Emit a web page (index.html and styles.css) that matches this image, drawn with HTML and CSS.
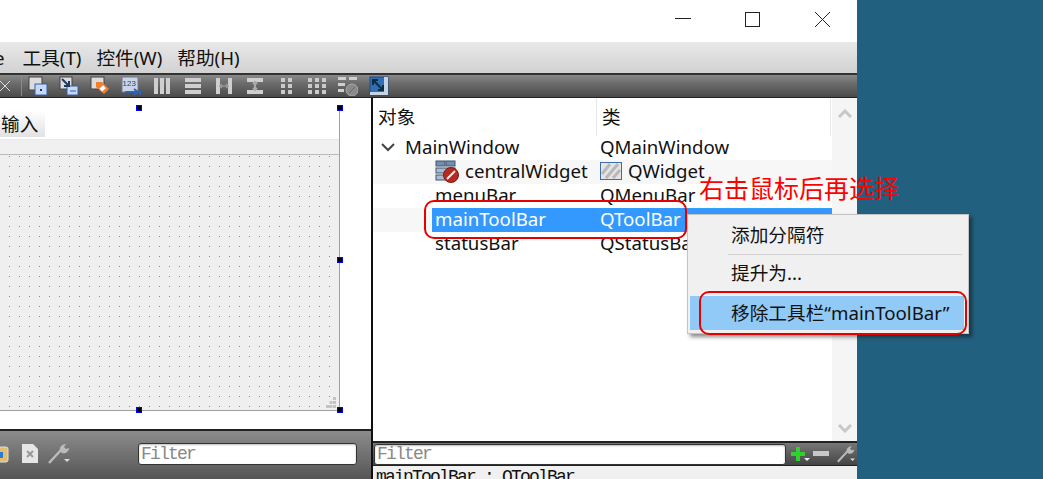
FILE: index.html
```html
<!DOCTYPE html>
<html lang="zh-CN">
<head>
<meta charset="utf-8">
<title>Qt Designer</title>
<link rel="stylesheet" href="styles.css">
</head>
<body>
<div class="window">
  <div class="titlebar">
    <svg class="winbtn" width="156" height="20" viewBox="0 0 156 20"><path d="M0 9.5h16" stroke="#222" fill="none"/><rect x="70.5" y="3.5" width="14" height="14" stroke="#222" fill="none"/><path d="M155 3l-15 15M140 3l15 15" stroke="#222" fill="none"/></svg>
  </div>
  <div class="menubar">
    <span class="menu-cut">e</span>
    <span class="menu-item">工具(T)</span>
    <span class="menu-item">控件(W)</span>
    <span class="menu-item">帮助(H)</span>
  </div>
  <div class="toolbar">
    <svg class="tool-x" width="10" height="10" viewBox="0 0 10 10"><path d="M0 0l10 10M10 0L0 10" stroke="#ddd" fill="none"/></svg>
    <span class="tool-sep"></span>
    <svg class="ti" width="20" height="20" viewBox="0 0 20 20"><rect x="1" y="1" width="13" height="13" fill="#dcdcdc" stroke="#444"/><rect x="7" y="8" width="12" height="11" fill="#c4d8f8" stroke="#3c5f9c"/><rect x="12" y="13" width="2" height="2" fill="#234"/></svg>
    <svg class="ti" width="20" height="20" viewBox="0 0 20 20"><rect x="1" y="1" width="12" height="12" fill="#dcdcdc" stroke="#444"/><rect x="8" y="10" width="11" height="9" fill="#c4d8f8" stroke="#3c5f9c"/><path d="M3 3l7 7M10 5v5H5" stroke="#1e3a66" stroke-width="2" fill="none"/><path d="M11 15h6" stroke="#3c5f9c"/></svg>
    <svg class="ti" width="20" height="20" viewBox="0 0 20 20"><rect x="1" y="1" width="13" height="12" fill="#dcdcdc" stroke="#444"/><path d="M6 6h6l7 7-5 5-8-7z" fill="#f08030"/><rect x="10" y="10" width="5" height="4" fill="#fff" transform="rotate(-40 13 12)"/></svg>
    <svg class="ti" width="20" height="20" viewBox="0 0 20 20"><rect x="1" y="1" width="16" height="15" fill="#c9d4ea" stroke="#778"/><text x="1.500" y="10" class="ti-num">123</text><path d="M4 16h12M13 13l4 3-4 3M19 13v6" stroke="#2f62b0" stroke-width="2" fill="none"/></svg>
    <svg class="ti" width="20" height="20" viewBox="0 0 20 20"><path d="M2 2h4v16H2zM8 2h4v16H8zM14 2h4v16h-4z" fill="#cfcfcf"/></svg>
    <svg class="ti" width="20" height="20" viewBox="0 0 20 20"><path d="M2 2h16v4H2zM2 8h16v4H2zM2 14h16v4H2z" fill="#cfcfcf"/></svg>
    <svg class="ti" width="20" height="20" viewBox="0 0 20 20"><path d="M2 2h4v16H2zM14 2h4v16h-4z" fill="#cfcfcf"/><path d="M6 10h8M8 8l-2 2 2 2M12 8l2 2-2 2" stroke="#999" stroke-width="1.500" fill="none"/></svg>
    <svg class="ti" width="20" height="20" viewBox="0 0 20 20"><path d="M2 2h16v4H2zM2 14h16v4H2z" fill="#cfcfcf"/><path d="M10 6v8M8 8l2-2 2 2M8 12l2 2 2-2" stroke="#aaa" stroke-width="2" fill="none"/></svg>
    <svg class="ti" width="20" height="20" viewBox="0 0 20 20"><path d="M5 2h4v4H5zM12 2h4v4h-4zM5 8h4v4H5zM12 8h4v4h-4zM5 14h4v4H5zM12 14h4v4h-4z" fill="#cacaca"/></svg>
    <svg class="ti" width="20" height="20" viewBox="0 0 20 20"><path d="M1 2h4v4H1zM8 2h4v4H8zM15 2h4v4h-4zM1 8h4v4H1zM8 8h4v4H8zM15 8h4v4h-4zM1 14h4v4H1zM8 14h4v4H8zM15 14h4v4h-4z" fill="#cacaca"/></svg>
    <svg class="ti" width="20" height="20" viewBox="0 0 20 20"><path d="M0 1h8v3H0zM11 1h8v3h-8zM0 7h7v3H0zM0 13h6v3H0z" fill="#cfcfcf"/><circle cx="14" cy="14" r="6" fill="#8a8a8a" stroke="#aaa"/><path d="M11 17l6-6" stroke="#666"/></svg>
    <svg class="ti" width="20" height="20" viewBox="0 0 20 20"><rect x="1" y="1" width="18" height="18" fill="#2f6fb5" stroke="#1e4a80"/><path d="M15 1h4v18H1v-3h14z" fill="#c8d4e4"/><path d="M4 4l10 10M4 9V4h5M14 9v5H9" stroke="#0c2c44" stroke-width="2" fill="none"/></svg>
  </div>
  <div class="workspace">
    <div class="left">
      <div class="canvas">
        <div class="form">
          <div class="form-menu"><span class="form-tab">输入</span></div>
          <div class="form-tools"></div>
          <div class="form-grid">
            <svg class="grip" width="11" height="11" viewBox="0 0 11 11"><path d="M7 0h3v3H7zM3.500 4h3v3h-3zM7 4h3v3H7zM0 8h3v3H0zM3.500 8h3v3h-3zM7 8h3v3H7z" fill="#c4c4c4"/></svg>
          </div>
          <span class="handle h-tc"></span>
          <span class="handle h-tr"></span>
          <span class="handle h-mr"></span>
          <span class="handle h-bc"></span>
          <span class="handle h-br"></span>
        </div>
      </div>
      <div class="bottombar">
        <svg class="bb-cut" width="10" height="20" viewBox="0 0 10 20"><rect x="-8" y="3" width="16" height="15" rx="2" fill="#e0c070" stroke="#ddd"/><rect x="-3" y="8" width="6" height="6" fill="#2a7ad8"/></svg>
        <svg class="bb-doc" width="16" height="19" viewBox="0 0 16 19"><path d="M0 0h11l5 5v14H0z" fill="#e6e6e6"/><path d="M5 7l6 6M11 7l-6 6" stroke="#999" stroke-width="2"/></svg>
        <svg class="bb-wrench" width="22" height="21" viewBox="0 0 22 21"><path d="M1 20L13 7" stroke="#bbb" stroke-width="2.500" fill="none"/><path d="M12 8c-1-4 2-7 6-7l-2 3 2 2 3-1c0 4-4 6-7 5" fill="#bbb"/><path d="M16 16h6l-3 3z" fill="#ddd"/></svg>
        <span class="filter filter-left">Filter</span>
      </div>
    </div>
    <div class="right">
      <div class="tree-area">
        <div class="tree">
          <div class="tree-head"><span class="col-a">对象</span><span class="col-b">类</span></div>
          <div class="row">
            <span class="col-a lvl0"><svg class="arrow" width="14" height="9" viewBox="0 0 14 9"><path d="M1 1l6 6 6-6" stroke="#444" stroke-width="2" fill="none"/></svg>MainWindow</span>
            <span class="col-b">QMainWindow</span>
          </div>
          <div class="row alt">
            <span class="col-a lvl1"><svg class="ic-central" width="24" height="23" viewBox="0 0 24 23"><rect x="1" y="1" width="9" height="5" fill="#6f8fb8" stroke="#456"/><rect x="11" y="1" width="9" height="5" fill="#6f8fb8" stroke="#456"/><rect x="1" y="8" width="19" height="5" fill="#a9bcd4" stroke="#456"/><rect x="1" y="15" width="19" height="5" fill="#a9bcd4" stroke="#456"/><circle cx="16" cy="15" r="7.500" fill="#b82a20" stroke="#7a1a14"/><path d="M12 19l8-8" stroke="#eee" stroke-width="2"/></svg>centralWidget</span>
            <span class="col-b"><svg class="ic-widget" width="22" height="18" viewBox="0 0 22 18"><rect x=".5" y=".5" width="21" height="17" fill="#e4e4e4" stroke="#3c6ea8"/><path d="M2 12L10 2M6 16L18 2M13 16l7-8" stroke="#b8b8b8" stroke-width="3" fill="none"/></svg>QWidget</span>
          </div>
          <div class="row"><span class="col-a lvl2">menuBar</span><span class="col-b">QMenuBar</span></div>
          <div class="row alt">
            <span class="col-a lvl2 sel">mainToolBar</span>
            <span class="col-b sel sel-b">QToolBar</span>
          </div>
          <div class="row"><span class="col-a lvl2">statusBar</span><span class="col-b">QStatusBar</span></div>
        </div>
        <div class="scroll">
          <svg width="16" height="9" viewBox="0 0 16 9"><path d="M2 8l6-6 6 6" stroke="#c8c8c8" stroke-width="3" fill="none"/></svg>
          <svg width="16" height="9" viewBox="0 0 16 9"><path d="M2 1l6 6 6-6" stroke="#c8c8c8" stroke-width="3" fill="none"/></svg>
        </div>
      </div>
      <div class="filterbar">
        <span class="filter filter-right">Filter</span>
        <svg class="fb-plus" width="20" height="16" viewBox="0 0 20 16"><path d="M6 1h4v5h5v4h-5v5H6v-5H1V6h5z" fill="#2fd030"/><path d="M14 12h6l-3 3z" fill="#eee"/></svg>
        <svg class="fb-minus" width="16" height="6" viewBox="0 0 16 6"><rect width="16" height="5" fill="#c8c8c8"/></svg>
        <svg class="fb-wrench" width="18" height="18" viewBox="0 0 22 21"><path d="M1 20L13 7" stroke="#bbb" stroke-width="2.500" fill="none"/><path d="M12 8c-1-4 2-7 6-7l-2 3 2 2 3-1c0 4-4 6-7 5" fill="#bbb"/><path d="M16 16h6l-3 3z" fill="#ddd"/></svg>
      </div>
      <div class="status-line">mainToolBar : QToolBar</div>
    </div>
  </div>
</div>

<div class="ctx-menu">
  <div class="ctx-item">添加分隔符</div>
  <div class="ctx-line"></div>
  <div class="ctx-item">提升为...</div>
  <div class="ctx-line"></div>
  <div class="ctx-item ctx-active">移除工具栏“mainToolBar”</div>
</div>
<div class="note">右击鼠标后再选择</div>
<div class="ring ring-row"></div>
<div class="ring ring-menu"></div>
</body>
</html>
```

FILE: styles.css
```css
* { box-sizing: border-box; }
html, body { margin: 0; height: 100%; overflow: hidden; }
body {
  background: #22607f;
  font-family: "Noto Sans", "Noto Sans CJK SC", sans-serif;
  font-size: 18.67px;
  color: #111;
  position: relative;
}
.window { width: 857px; height: 479px; display: flex; flex-direction: column; background: #fff; overflow: hidden; }

.titlebar { height: 42px; flex: none; background: #fff; display: flex; justify-content: flex-end; padding: 9px 26px 0 0; }
.winbtn { display: block; }

.menubar {
  height: 31px; flex: none; display: flex; align-items: center; gap: 15px;
  background: linear-gradient(#e8e8e8, #d2d2d2);
  line-height: 31px;
}
.menu-cut { margin-left: -6px; margin-right: 3px; }

.toolbar {
  height: 25px; flex: none; display: flex; align-items: center; gap: 11px;
  border-top: 2px solid #333; border-bottom: 1px solid #222;
  background: linear-gradient(#8a8a8a, #6e6e6e 35%, #4a4a4a);
  padding-bottom: 1px;
}
.tool-x { flex: none; }
.tool-sep { width: 1px; height: 20px; background: #8c8c8c; margin-right: -5px; flex: none; }
.ti { flex: none; display: block; filter: blur(.4px); }
.ti-num { font-size: 8px; fill: #345; font-family: "Liberation Sans", sans-serif; }

.workspace { flex: 1; display: flex; min-height: 0; }
.left { width: 373px; flex: none; border-right: 2px solid #111; display: flex; flex-direction: column; }
.canvas { height: 331px; flex: none; padding-top: 10px; background: #fff; }
.form { width: 340px; height: 303px; position: relative; border-right: 1px solid #a0a0a0; border-bottom: 1px solid #a0a0a0; display: flex; flex-direction: column; }
.form-menu { height: 32px; flex: none; padding-top: 2px; border-bottom: 1px solid #e8e8e8; }
.form-tab { display: block; width: 45px; height: 27px; background: linear-gradient(#fff, #e2e2e2); padding-left: 1px; line-height: 28px; }
.form-tools { height: 15px; flex: none; background: #f0f0f0; border-bottom: 1px solid #bbb; }
.form-grid {
  flex: 1; position: relative;
  background-color: #efefef;
  background-image: radial-gradient(circle at .5px .5px, #8a8a8a .8px, transparent .8px);
  background-size: 10px 10px;
  background-position: 9px 1px;
}
.grip { position: absolute; right: 2px; bottom: 2px; display: block; }
.handle { position: absolute; width: 6px; height: 6px; background: #000; border: 1px solid #0000ff; }
.h-tc { left: 136px; top: -3px; }
.h-tr { left: 337px; top: -3px; }
.h-mr { left: 337px; top: 149px; }
.h-bc { left: 136px; top: 299px; }
.h-br { left: 337px; top: 299px; }

.bottombar {
  flex: 1; position: relative; display: flex; align-items: center; padding: 0 0 3px 0;
  border-top: 2px solid #222;
  background: linear-gradient(#8c8c8c, #555);
}
.bb-cut { flex: none; }
.bb-doc { flex: none; margin-left: 12px; }
.bb-wrench { flex: none; margin-left: 10px; }
.filter {
  display: block; background: #fff; border: 1px solid #333; border-radius: 3px;
  font-family: "Liberation Mono", monospace; font-size: 18px; letter-spacing: -1.8px; color: #888; padding-left: 2px;
  box-shadow: inset 0 1px 2px #bbb;
}
.filter-left { width: 219px; height: 22px; margin-left: 68px; line-height: 21px; }

.right { flex: 1; min-width: 0; display: flex; flex-direction: column; }
.tree-area { height: 343px; flex: none; display: flex; background: #fff; }
.tree { flex: 1; min-width: 0; }
.scroll { width: 25px; flex: none; background: #f5f5f5; display: flex; flex-direction: column; justify-content: space-between; align-items: center; padding: 11px 0 8px; }
.scroll svg { display: block; }
.tree-head { height: 38px; display: flex; line-height: 38px; }
.tree-head .col-a { width: 224px; padding-left: 5px; border-right: 1px solid #e8e8e8; }
.tree-head .col-b { flex: 1; padding-left: 5px; border-right: 1px solid #e8e8e8; margin-right: 1px; }
.row { height: 24px; display: flex; line-height: 20px; white-space: nowrap; }
.alt { background: #f7f7f7; }
.row .col-a { width: 224px; display: flex; align-items: center; flex: none; padding-bottom: 2px; }
.row .col-b { flex: 1; padding-left: 3px; padding-bottom: 2px; display: flex; align-items: center; min-width: 0; }
.lvl0 { padding-left: 32px; position: relative; }
.arrow { position: absolute; left: 8px; top: 7px; }
.lvl1 { padding-left: 62px; }
.lvl2 { padding-left: 62px; }
.ic-central { margin-right: 6px; flex: none; }
.ic-widget { margin-right: 6px; flex: none; }
.row .sel { background: #3399ff; color: #fff; }
.row .lvl2.sel { margin-left: 59px; padding-left: 3px; width: 165px; }
.sel-b { outline: 1px dotted #c08030; outline-offset: -1px; }

.filterbar {
  height: 24px; flex: none; display: flex; align-items: center;
  border-top: 2px solid #222;
  background: linear-gradient(#777, #444);
  padding-left: 1px;
}
.filter-right { width: 412px; height: 21px; line-height: 19px; }
.fb-plus { margin-left: 4px; flex: none; }
.fb-minus { margin-left: 3px; flex: none; }
.fb-wrench { margin-left: 8px; flex: none; }
.status-line { flex: 1; background: #f0f0f0; border-top: 1px solid #222; font-family: "Liberation Mono", monospace; font-size: 18px; letter-spacing: -1.8px; line-height: 22px; padding-left: 3px; overflow: hidden; white-space: nowrap; }

.ctx-menu {
  position: absolute; left: 687px; top: 214px; width: 282px; height: 120px;
  background: #f0f0f0; border: 1px solid #c4c4c4; box-shadow: 3px 3px 4px rgba(0,0,0,.45);
  padding: 2px;
}
.ctx-item { height: 36px; line-height: 36px; padding-left: 41px; white-space: nowrap; }
.ctx-line { height: 1px; background: #d4d4d4; margin: 0 4px 0 38px; }
.ctx-item:first-child { height: 37px; line-height: 35px; }
.ctx-active { background: #91c9f7; height: 34px; line-height: 34px; margin-top: 4px; margin-right: 2px; }
.note { position: absolute; left: 699px; top: 168px; font-family: "Noto Sans CJK SC", sans-serif; font-size: 25px; line-height: 38px; color: #ff0000; white-space: nowrap; }
.ring { position: absolute; border: 2px solid #e80000; border-radius: 10px; }
.ring-row { left: 424px; top: 200px; width: 263px; height: 39px; }
.ring-menu { left: 699px; top: 291px; width: 268px; height: 44px; }
```
